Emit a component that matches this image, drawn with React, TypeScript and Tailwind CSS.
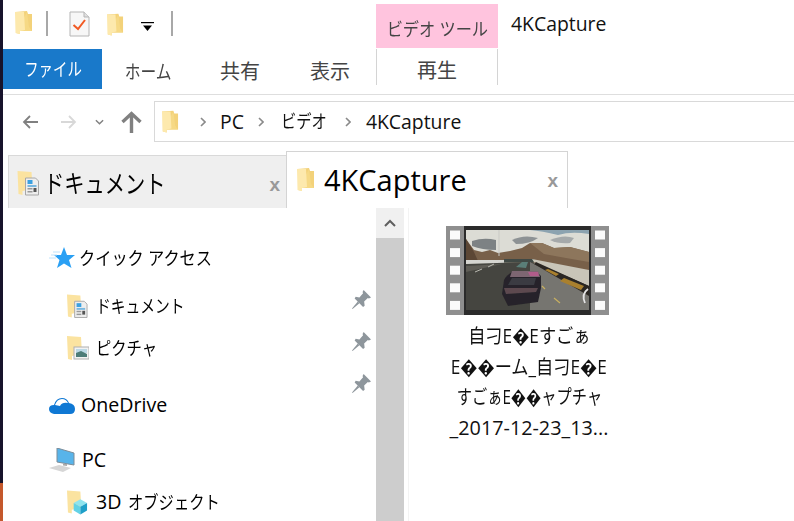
import React from "react";

const JP = "font-['Open_Sans','Noto_Sans_CJK_JP',sans-serif]";

function Folder({ className }: { className: string }) {
  return (
    <svg viewBox="0 0 18 24" className={className}>
      <path d="M0 1 L12 0 L13 3 L17 3 L17 20 L5 20 Z" fill="#f3d27a" />
      <path d="M12 1 L14 16 L17 20 L5 20 L5 23 L1 22" fill="#f6d985" />
      <path d="M0 1 L9 1 L10 19 L5 20 L5 23 L0.5 22 Z" fill="#fde9ad" />
    </svg>
  );
}

function DocFolder({ className }: { className: string }) {
  return (
    <svg viewBox="0 0 22 25" className={className}>
      <path d="M0 0 L14 1 L15 18 L5 20 L5 24 L1 23 Z" fill="#fbe3a0" />
      <path d="M8 7 H18 L21 10 V24 H8 Z" fill="#eeeeee" stroke="#a8a8a8" strokeWidth="1" />
      <rect x="10" y="9" width="5" height="4" fill="#3aa0e0" />
      <rect x="10" y="14" width="9" height="2" fill="#79b8e0" />
      <rect x="10" y="17" width="5" height="1.5" fill="#999" />
      <rect x="16" y="17" width="3" height="4" fill="#555" />
      <rect x="10" y="20" width="5" height="1.5" fill="#999" />
    </svg>
  );
}

function PicFolder({ className }: { className: string }) {
  return (
    <svg viewBox="0 0 22 25" className={className}>
      <path d="M0 0 L14 1 L15 18 L5 20 L5 24 L1 23 Z" fill="#fbe3a0" />
      <rect x="7" y="11" width="15" height="12" fill="#f2f2f2" stroke="#b0b0b0" strokeWidth="1" />
      <rect x="9" y="13" width="11" height="4" fill="#bcd9e6" />
      <path d="M9 17 L14 15 L20 18 V21 H9 Z" fill="#4d7c78" />
    </svg>
  );
}

function CubeFolder({ className }: { className: string }) {
  return (
    <svg viewBox="0 0 22 25" className={className}>
      <path d="M0 0 L14 1 L15 18 L5 20 L5 24 L1 23 Z" fill="#fbe3a0" />
      <path d="M7 13 L14 9 L21 13 L14 17 Z" fill="#8fe4ee" />
      <path d="M7 13 L14 17 V25 L7 21 Z" fill="#63d2e6" />
      <path d="M14 17 L21 13 V21 L14 25 Z" fill="#1e9fc8" />
    </svg>
  );
}

function Pin() {
  return (
    <svg viewBox="0 0 18 18" className="w-[19px] h-[19px]">
      <path d="M11 0 L18 7 L16 8 L15 7.5 L11.5 11 L12 15 L10.5 16 L2.5 8 L3.5 6.5 L7 7 L10.5 3 L10 2 Z" fill="#8e969c" />
      <path d="M5.5 11 L7 12.5 L0.5 18 L0 17.5 Z" fill="#8e969c" />
    </svg>
  );
}

function Chevron({ className }: { className: string }) {
  return (
    <svg viewBox="0 0 6 10" className={className} fill="none" stroke="#8a8a8a" strokeWidth="1.6">
      <path d="M1 1 L5 5 L1 9" />
    </svg>
  );
}

function Thumb() {
  return (
    <svg viewBox="0 0 163 89" className="w-[163px] h-[89px] block">
      <defs>
        <filter id="soft"><feGaussianBlur stdDeviation="0.6" /></filter>
        <clipPath id="pic"><rect x="20" y="4" width="123" height="80" /></clipPath>
      </defs>
      <rect width="163" height="89" fill="#8f8f8f" />
      <rect x="18" width="127" height="89" fill="#2b2b2b" />
      {[0, 1, 2, 3, 4].map((i) => (
        <g key={i} fill="#fbfbfb">
          <rect x="4" y={4.5 + i * 17.6} width="10" height="9" />
          <rect x="149" y={4.5 + i * 17.6} width="10" height="9" />
        </g>
      ))}
      <g clipPath="url(#pic)" filter="url(#soft)">
        <rect x="20" y="4" width="123" height="36" fill="#dcdcd5" />
        <path d="M84 4 H143 V8 Q125 5 112 9 Q96 5 84 4 Z" fill="#8ca3b0" />
        <path d="M26 15 Q38 11 50 14 L50 24 Q36 24 26 20 Z" fill="#7d8284" />
        <path d="M66 14 Q78 8 92 12 Q84 18 70 18 Z" fill="#8d9294" />
        <path d="M104 14 Q118 8 128 12 L124 17 Q112 18 104 14 Z" fill="#a5a9aa" />
        <path d="M20 13 L28 24 L36 26 L44 24 L52 27 L64 25 L76 22 L84 17 L96 17 L108 22 L124 21 L143 26 V48 L100 37 L20 36 Z" fill="#78604a" />
        <path d="M20 13 L28 26 L32 35 L20 35 Z" fill="#5b4636" />
        <path d="M84 17 L96 17 L108 22 L124 21 L143 26 V36 L120 32 L98 28 Z" fill="#8d765c" />
        <path d="M53 4 V30" stroke="#c9c9c4" strokeWidth="1" />
        <rect x="20" y="34" width="38" height="3.5" fill="#d5d5d0" />
        <rect x="58" y="33" width="30" height="3.5" fill="#3f4a44" />
        <path d="M20 38 L86 36 L143 70 V84 H20 Z" fill="#45453f" />
        <path d="M84 36 L143 66 V84 H84 Z" fill="#767470" />
        <path d="M20 40 L56 38 L20 46 Z" fill="#5e5d56" />
        <path d="M29 46 L36 43 M42 41 L48 38" stroke="#b8b8b0" strokeWidth="1" />
        <path d="M70 41 L76 36 L82 36 L80 42 Z" fill="#5a7e78" />
        <path d="M86 33 L143 44 V60 L88 36 Z" fill="#c9c5b8" />
        <path d="M90 36 L143 60 V70 L88 38 Z" fill="#2c2824" />
        <path d="M102 43 L113 48 L110 50 L99 44 Z M118 52 L138 60 L135 64 L114 55 Z" fill="#a9802f" />
        <path d="M96 60 L99 63 M108 72 L114 77" stroke="#c8b060" strokeWidth="1.2" />
        <path d="M58 54 Q62 46 72 45 L90 45 L95 50 L95 62 L92 76 L62 80 L56 68 Z" fill="#26242a" />
        <path d="M66 45 L92 45 L94 51 L64 51 Z" fill="#7d6672" />
        <path d="M82 46 L92 46 L93 50 L84 50 Z" fill="#b05c8a" />
        <path d="M66 52 L90 52 L88 59 L62 59 Z" fill="#3a3b42" />
        <path d="M58 62 L92 62 L90 66 L60 68 Z" fill="#5d4a50" />
        <path d="M142 63 Q135 68 139 77" stroke="#e4e4e4" strokeWidth="1.8" fill="none" />
      </g>
    </svg>
  );
}

export default function App() {
  return (
    <div className={`w-[794px] h-[521px] flex overflow-hidden bg-white text-black ${JP}`}>
      <div className="w-[3px] h-full flex flex-col shrink-0">
        <div className="h-[483px] bg-[#17132b]" />
        <div className="flex-1 bg-[#c4582c]" />
      </div>
      <div className="flex-1 min-w-0 flex flex-col">
        {/* title row */}
        <div className="h-[49px] flex items-start shrink-0">
          <div className="flex items-start pt-[11px] pl-[12px] w-[373px]">
            <Folder className="w-[18px] h-[24px]" />
            <div className="w-[2px] h-[25px] bg-[#a8a8a8] ml-[13px]" />
            <svg viewBox="0 0 21 26" className="w-[21px] h-[26px] ml-[21px]">
              <path d="M1 1 H15 L20 6 V25 H1 Z" fill="#f7f7f7" stroke="#b5b5b5" />
              <path d="M15 1 V6 H20" fill="#e0e0e0" stroke="#b5b5b5" />
              <path d="M4.5 14 L9 18 L16 9" fill="none" stroke="#f15a24" strokeWidth="2" />
            </svg>
            <Folder className="w-[17px] h-[24px] ml-[17px] mt-[2px]" />
            <svg viewBox="0 0 13 10" className="w-[13px] h-[10px] ml-[17px] mt-[11px]">
              <rect width="13" height="1.2" fill="#000" />
              <path d="M2 3.5 H11 L6.5 9 Z" fill="#000" />
            </svg>
            <div className="w-[2px] h-[25px] bg-[#a8a8a8] ml-[17px]" />
          </div>
          <div className="w-[122px] h-[44px] mt-[4px] bg-[#ffc4de] text-[#444] text-[18px] text-center leading-[50px] whitespace-nowrap">
            <span className="inline-block scale-x-[0.9]">ビデオ ツール</span>
          </div>
          <div className="ml-[13px] pt-[9px] text-[19.4px] leading-[30px] text-[#111]">4KCapture</div>
        </div>
        {/* ribbon */}
        <div className="h-[46px] flex items-start shrink-0 border-b border-[#dedede]">
          <div className="w-[99px] h-[40px] bg-[#1979ca] text-white text-[18px] flex items-center justify-center">
            <span className="inline-block scale-x-[0.8]">ファイル</span>
          </div>
          <div className="w-[92px] h-[36px] text-[#444] text-[19px] flex items-center justify-center mt-[5px]">
            <span className="inline-block scale-x-[0.83]">ホーム</span>
          </div>
          <div className="w-[94px] h-[36px] text-[#444] text-[20px] flex items-center pl-[26px] mt-[5px]">共有</div>
          <div className="w-[88px] h-[36px] text-[#444] text-[20px] flex items-center pl-[22px] mt-[5px]">表示</div>
          <div className="w-[122px] h-[36px] border-x border-[#d4d4d4] text-[#444] text-[20px] flex items-start justify-center pt-[8px] leading-[28px]">再生</div>
        </div>
        {/* address row */}
        <div className="h-[56px] flex items-start shrink-0">
          <div className="w-[151px] h-[46px] pt-[8px] flex items-center shrink-0">
            <svg viewBox="0 0 16 14" className="w-[16px] h-[14px] ml-[19px]" fill="none" stroke="#808080" strokeWidth="1.8">
              <path d="M16 7 H2 M8 1 L2 7 L8 13" />
            </svg>
            <svg viewBox="0 0 16 14" className="w-[16px] h-[14px] ml-[23px]" fill="none" stroke="#d8d8d8" strokeWidth="1.8">
              <path d="M0 7 H14 M8 1 L14 7 L8 13" />
            </svg>
            <svg viewBox="0 0 10 6" className="w-[9px] h-[6px] ml-[18px]" fill="none" stroke="#808080" strokeWidth="1.6">
              <path d="M1 1 L5 5 L9 1" />
            </svg>
            <svg viewBox="0 0 21 22" className="w-[21px] h-[22px] ml-[17px]" fill="none" stroke="#808080" strokeWidth="3.4">
              <path d="M10.5 22 V3 M1.5 11 L10.5 2.5 L19.5 11" />
            </svg>
          </div>
          <div className="flex-1 h-[41px] mt-[6px] border border-r-0 border-[#d9d9d9] flex items-center text-[19.4px] text-[#111] whitespace-nowrap">
            <Folder className="w-[17px] h-[24px] ml-[7px]" />
            <Chevron className="w-[6px] h-[10px] ml-[21px]" />
            <span className="ml-[14px]">PC</span>
            <Chevron className="w-[6px] h-[10px] ml-[14px]" />
            <span className="ml-[17px] text-[18px] inline-block origin-left scale-x-[0.85]">ビデオ</span>
            <Chevron className="w-[6px] h-[10px] ml-[10px]" />
            <span className="ml-[15px]">4KCapture</span>
          </div>
        </div>
        {/* tabs */}
        <div className="h-[57px] flex items-end shrink-0">
          <div className="ml-[5px] w-[278px] h-[53px] bg-[#efefef] border-t border-l border-[#d9d9d9] flex items-center pl-[8px] shrink-0">
            <DocFolder className="w-[23px] h-[25px] mt-[3px]" />
            <span className="text-[25px] ml-[4px] mt-[3px] text-black whitespace-nowrap inline-block origin-left scale-x-[0.81]">ドキュメント</span>
            <span className="ml-auto mr-[6px] mt-[4px] text-[#999] text-[19px] font-bold leading-none font-['Liberation_Sans',sans-serif]">x</span>
          </div>
          <div className="w-[282px] h-[57px] bg-white border-t border-x border-[#d4d4d4] flex items-center pl-[10px] shrink-0">
            <Folder className="w-[18px] h-[26px]" />
            <span className="text-[29px] ml-[9px] text-black whitespace-nowrap">4KCapture</span>
            <span className="ml-auto mr-[9px] text-[#999] text-[19px] font-bold leading-none font-['Liberation_Sans',sans-serif]">x</span>
          </div>
        </div>
        {/* body */}
        <div className="flex-1 min-h-0 flex">
          <div className="w-[373px] shrink-0 flex overflow-hidden">
            <div className="flex-1 pt-[29px] text-[18px]">
              <div className="h-[42px] pl-[46px] flex items-center">
                <svg viewBox="0 0 26 22" className="w-[26px] h-[22px]">
                  <path d="M15 0 L18 8 L26 8 L20 13 L22.5 21 L15 16.5 L8 21 L10.5 13 L5 8 L12 8 Z" fill="#2aa0f4" />
                  <path d="M0 11 H7 M2 8 H8 M4 5 H11" stroke="#bfe2fb" strokeWidth="1" />
                </svg>
                <span className="ml-[4px] whitespace-nowrap inline-block origin-left scale-x-[0.9]">クイック アクセス</span>
              </div>
              <div className="h-[42px] mt-[6px] pl-[64px] flex items-center">
                <DocFolder className="w-[21px] h-[25px]" />
                <span className="ml-[8px] inline-block origin-left scale-x-[0.82]">ドキュメント</span>
              </div>
              <div className="h-[42px] pl-[64px] flex items-center">
                <PicFolder className="w-[22px] h-[25px]" />
                <span className="ml-[7px] inline-block origin-left scale-x-[0.85]">ピクチャ</span>
              </div>
              <div className="h-[42px] mt-[15px] pl-[46px] flex items-center">
                <svg viewBox="0 0 26 17" className="w-[26px] h-[17px]">
                  <path d="M5 17 Q0 16 0 12 Q0 8 5 8 Q7 1 13 1 Q18 1 20 6 Q26 7 26 12 Q26 17 21 17 Z" fill="#0f78d4" />
                  <path d="M6 8 Q8 2 13 2 Q17 2 19 6 Q13 5 11 9 Z" fill="#fff" />
                </svg>
                <span className="ml-[6px] text-[19.6px]">OneDrive</span>
              </div>
              <div className="h-[42px] mt-[13px] pl-[46px] flex items-center">
                <svg viewBox="0 0 26 24" className="w-[26px] h-[24px]">
                  <path d="M8 0 L25 5 V17 L8 14 Z" fill="#58b4ea" stroke="#7c8c98" strokeWidth="1" />
                  <path d="M14 15.5 L18 16 V18 L14 17.5 Z" fill="#aaa" />
                  <path d="M0 20 L10 17 L22 20 L14 24 Z" fill="#d6d6d6" />
                </svg>
                <span className="ml-[7px] text-[19.6px]">PC</span>
              </div>
              <div className="h-[42px] pl-[64px] flex items-center">
                <CubeFolder className="w-[21px] h-[25px]" />
                <span className="ml-[8px] whitespace-nowrap text-[19.6px]">3D</span>
                <span className="ml-[7px] whitespace-nowrap inline-block origin-left scale-x-[0.85]">オブジェクト</span>
              </div>
            </div>
            <div className="w-[24px] shrink-0 pt-[82px] flex flex-col gap-[23px] items-start">
              <Pin />
              <Pin />
              <Pin />
            </div>
          </div>
          <div className="w-[28px] shrink-0 flex flex-col bg-[#cdcdcd]">
            <div className="h-[30px] bg-[#f0f0f0] flex items-center justify-center">
              <svg viewBox="0 0 12 8" className="w-[12px] h-[8px]" fill="none" stroke="#5f5f5f" strokeWidth="2">
                <path d="M1 7 L6 2 L11 7" />
              </svg>
            </div>
          </div>
          <div className="flex-1 ml-[4px] border-l border-[#f3f3f3] pl-[37px] pt-[18px]">
            <Thumb />
            <div className="w-[166px] mt-[6px] text-[19.8px] leading-[30.5px] text-[#111] whitespace-nowrap">
              <div className="flex justify-center"><span className="shrink-0 inline-block scale-x-[0.87]">自刁E�Eすごぁ</span></div>
              <div className="flex justify-center"><span className="shrink-0 inline-block scale-x-[0.87]">E��ーム_自刁E�E</span></div>
              <div className="flex justify-center"><span className="shrink-0 inline-block scale-x-[0.77]">すごぁE��ャプチャ</span></div>
              <div className="flex justify-center"><span className="shrink-0">_2017-12-23_13...</span></div>
            </div>
          </div>
        </div>
      </div>
    </div>
  );
}
